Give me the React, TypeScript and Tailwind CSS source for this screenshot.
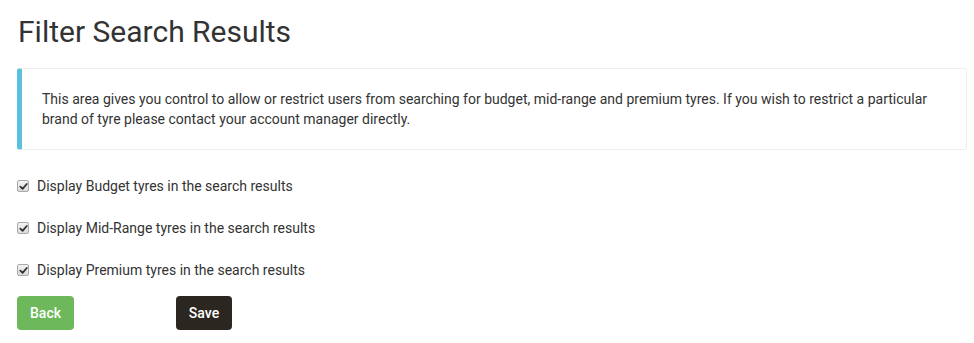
import React from "react";

function Check() {
  return (
    <span className="flex h-[12px] w-[12px] shrink-0 items-center justify-center rounded-[2px] border border-[#a9a9a9] bg-gradient-to-b from-[#f4f4f4] to-[#dcdcdc]">
      <svg width="9" height="9" viewBox="0 0 10 10">
        <path d="M1.5 5.2 L4 7.6 L8.6 2.2" fill="none" stroke="#333" strokeWidth="2" strokeLinecap="round" strokeLinejoin="round" />
      </svg>
    </span>
  );
}

function Row({ label }: { label: string }) {
  return (
    <label className="flex h-[20px] items-center">
      <Check />
      <span className="ml-[8px] text-[14px] leading-[20px] text-[#333]">{label}</span>
    </label>
  );
}

export default function App() {
  return (
    <div className="min-h-[343px] bg-white pl-[17px] pr-[7px] pt-[15px]" style={{ fontFamily: "Roboto, 'Liberation Sans', sans-serif" }}>
      <h2 className="ml-[1px] text-[30px] leading-[33px] font-normal text-[#333]">Filter Search Results</h2>
      <div className="mt-[20px] rounded-[3px] border border-[#eeeeee] border-l-[5px] border-l-[#5bc0de] p-[20px] text-[14px] leading-[20px] text-[#333]">
        This area gives you control to allow or restrict users from searching for budget, mid-range and premium tyres. If you wish to restrict a particular brand of tyre please contact your account manager directly.
      </div>
      <div className="mt-[26px] flex flex-col gap-[22px]">
        <Row label="Display Budget tyres in the search results" />
        <Row label="Display Mid-Range tyres in the search results" />
        <Row label="Display Premium tyres in the search results" />
      </div>
      <div className="mt-[16px] flex">
        <button className="h-[34px] w-[57px] rounded-[4px] bg-[#6cb85a] text-[14px] font-medium text-white">Back</button>
        <button className="ml-[102px] h-[34px] w-[56px] rounded-[4px] bg-[#2b2620] text-[14px] font-medium text-white">Save</button>
      </div>
    </div>
  );
}
